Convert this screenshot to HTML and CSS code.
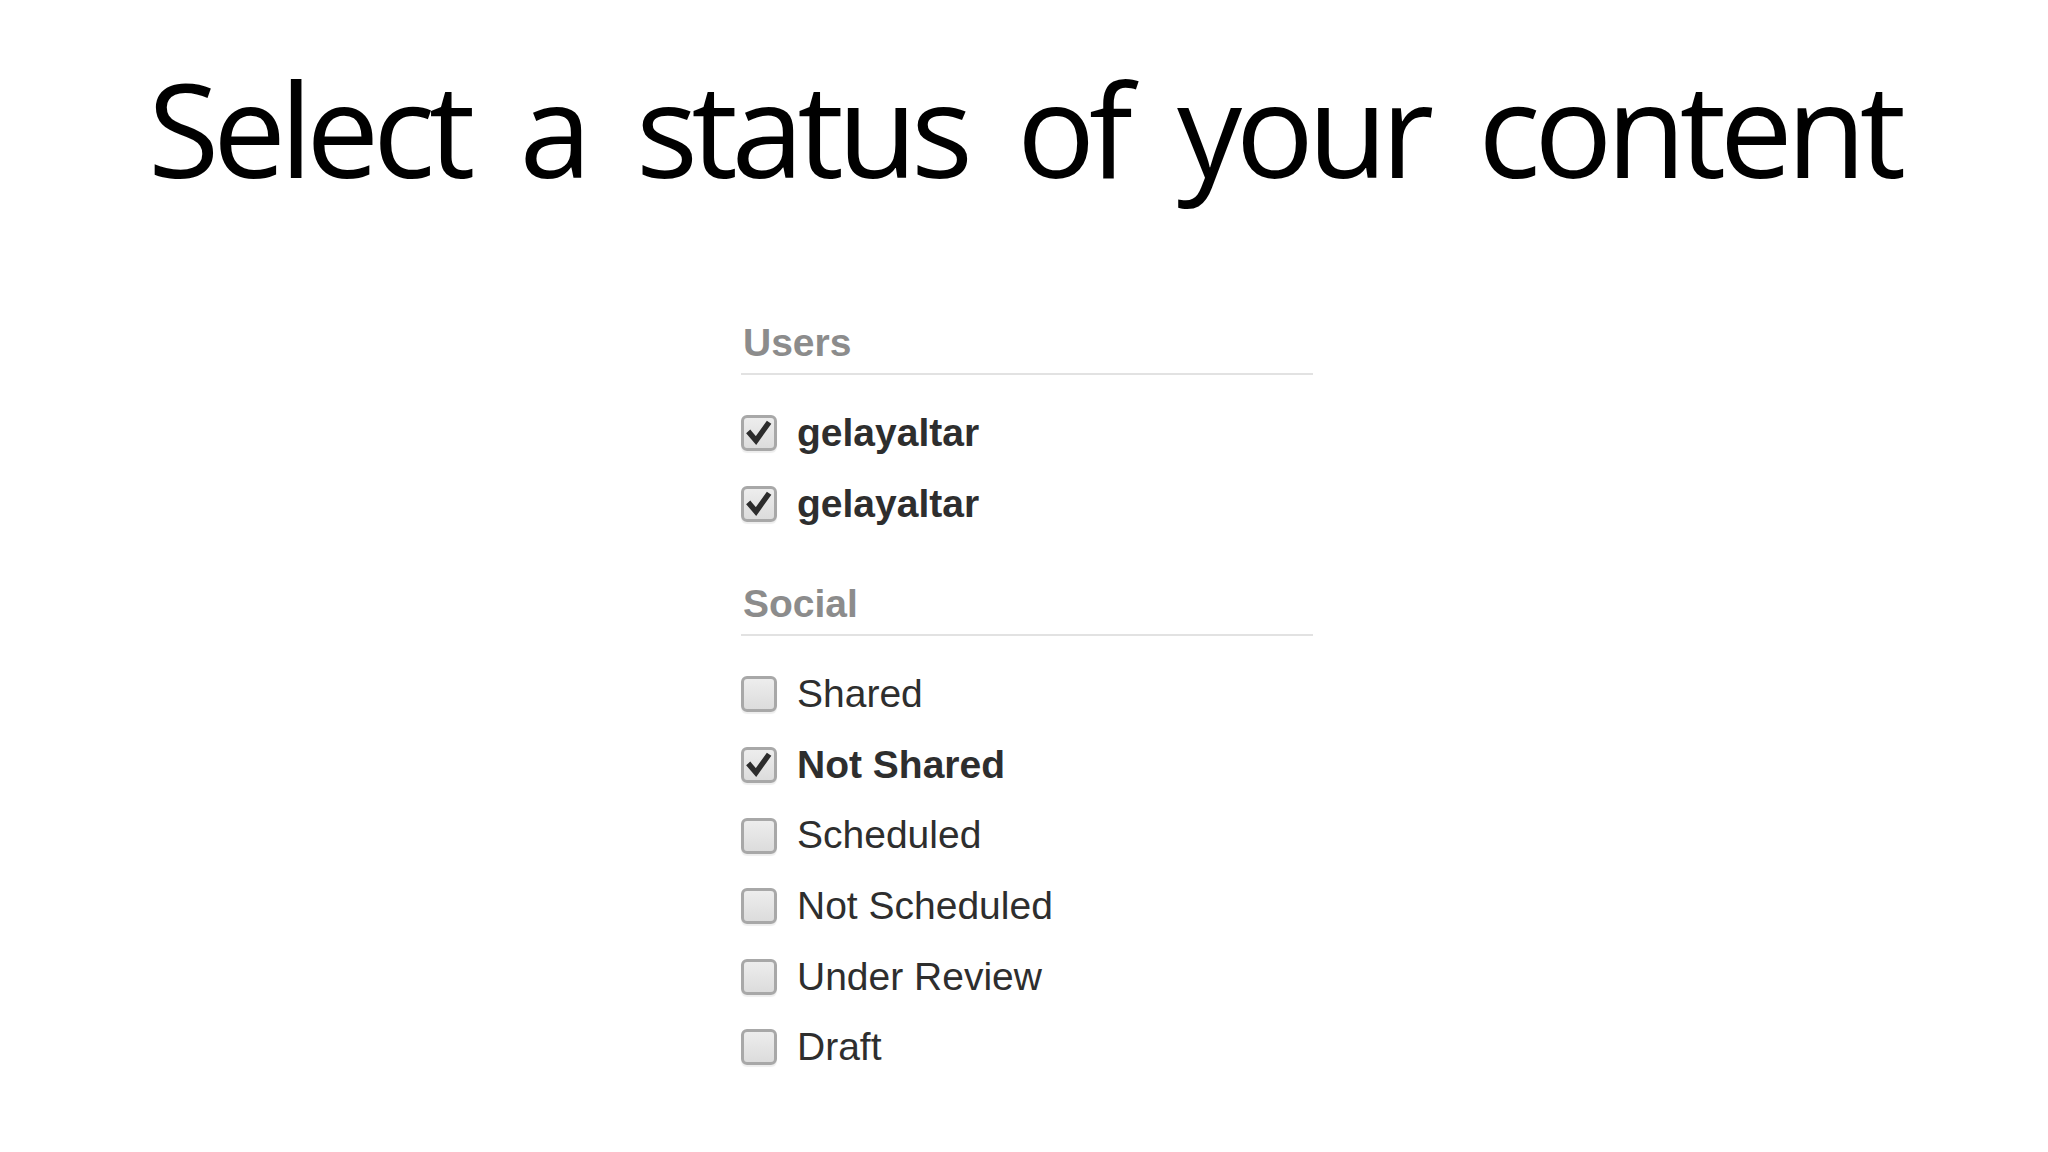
FILE: index.html
```html
<!DOCTYPE html>
<html lang="en">
<head>
<meta charset="utf-8">
<title>Select a status of your content</title>
<link rel="stylesheet" href="styles.css">
</head>
<body>
<h1 class="title">Select a status of your content</h1>
<div class="panel">
  <section class="group">
    <h2 class="group-title">Users</h2>
    <ul class="opts">
      <li class="opt checked"><span class="box"><svg viewBox="0 0 30 30"><path d="M6 15.5 L12 22.5 L23.5 6.5"/></svg></span><span class="label">gelayaltar</span></li>
      <li class="opt checked"><span class="box"><svg viewBox="0 0 30 30"><path d="M6 15.5 L12 22.5 L23.5 6.5"/></svg></span><span class="label">gelayaltar</span></li>
    </ul>
  </section>
  <section class="group">
    <h2 class="group-title">Social</h2>
    <ul class="opts">
      <li class="opt"><span class="box"></span><span class="label">Shared</span></li>
      <li class="opt checked"><span class="box"><svg viewBox="0 0 30 30"><path d="M6 15.5 L12 22.5 L23.5 6.5"/></svg></span><span class="label">Not Shared</span></li>
      <li class="opt"><span class="box"></span><span class="label">Scheduled</span></li>
      <li class="opt"><span class="box"></span><span class="label">Not Scheduled</span></li>
      <li class="opt"><span class="box"></span><span class="label">Under Review</span></li>
      <li class="opt"><span class="box"></span><span class="label">Draft</span></li>
    </ul>
  </section>
</div>
</body>
</html>
```
FILE: styles.css
```css
html, body {
  margin: 0;
  padding: 0;
  background: #ffffff;
}

.title {
  margin: 63px 0 0 0;
  font-family: "Open Sans", "Noto Sans", sans-serif;
  font-weight: 400;
  font-size: 130px;
  line-height: 130px;
  color: #000;
  text-align: center;
  letter-spacing: -6.3px;
  word-spacing: 23px;
}

.panel {
  width: 572px;
  margin: 128px 0 0 calc(50% - 283px);
  font-family: "Liberation Sans", Arial, sans-serif;
  font-size: 39px;
}

.group + .group {
  margin-top: 43px;
}

.group-title {
  margin: 0;
  padding: 0 0 8px 2px;
  font-size: 39px;
  line-height: 44px;
  font-weight: 700;
  color: #8c8c8c;
  border-bottom: 2px solid #e2e2e2;
}

.opts {
  list-style: none;
  margin: 23px 0 0 0;
  padding: 0;
}

.opt {
  display: flex;
  align-items: center;
  height: 70.6px;
  line-height: 70.6px;
  color: #2e2e2e;
}

.opt.checked .label {
  font-weight: 700;
}

.box {
  flex: none;
  box-sizing: border-box;
  width: 36px;
  height: 36px;
  border: 3px solid #a8a8a8;
  border-radius: 6px;
  background: linear-gradient(#ededed, #dcdcdc);
  box-shadow: 0 2px 1px rgba(0, 0, 0, 0.07);
  margin-right: 20px;
  display: flex;
  align-items: center;
  justify-content: center;
}

.box svg {
  width: 30px;
  height: 30px;
}

.box path {
  fill: none;
  stroke: #2c2c2c;
  stroke-width: 5.5;
  stroke-linecap: square;
  stroke-linejoin: miter;
}
```
